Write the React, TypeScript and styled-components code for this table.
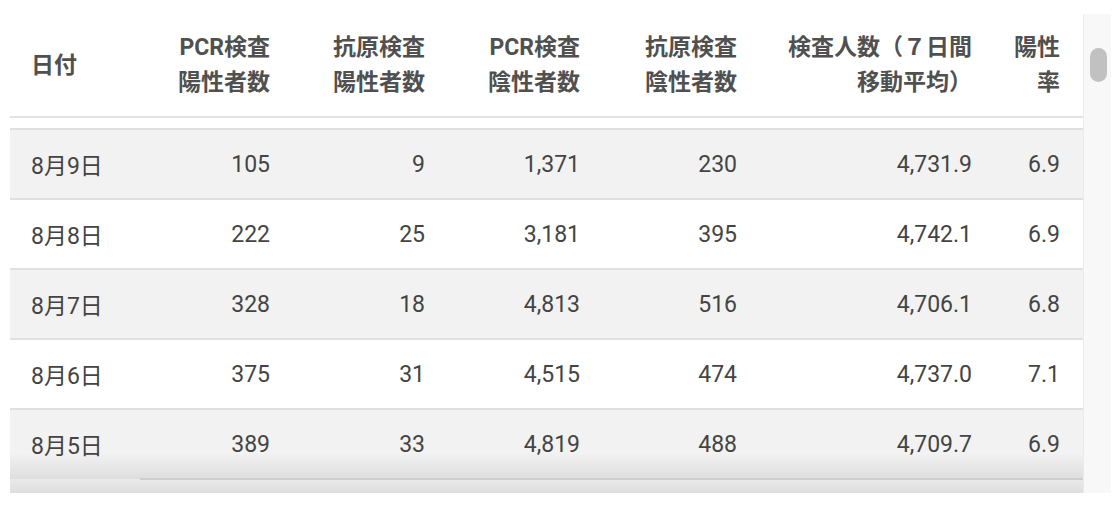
import React from 'react';
import styled, { createGlobalStyle } from 'styled-components';

const GlobalStyle = createGlobalStyle`
    html, body {
        margin: 0;
        padding: 0;
        background: #fff;
    }
    body {
        font-family: Roboto, 'Noto Sans CJK JP', 'Noto Sans', sans-serif;
    }
`;

const Page = styled.div`
    display: flex;
    align-items: flex-start;
    padding-left: 10px;
`;

const TableArea = styled.div`
    position: relative;
    width: 1073px;
    height: 493px;
    overflow: hidden;
`;

const BottomShade = styled.div`
    position: absolute;
    left: 0;
    right: 0;
    bottom: 0;
    height: 40px;
    pointer-events: none;
    background: linear-gradient(to bottom, rgba(0, 0, 0, 0), rgba(0, 0, 0, 0.13));
`;

const Table = styled.table`
    width: 1073px;
    table-layout: fixed;
    border-collapse: collapse;
    color: #444;
`;

const HeadCell = styled.th<{ $align?: 'left' | 'right'; $pr?: number }>`
    height: 70px;
    padding: 30px ${(p) => p.$pr ?? 20}px 16px ${(p) => (p.$align === 'left' ? 21 : 0)}px;
    text-align: ${(p) => p.$align ?? 'right'};
    vertical-align: middle;
    font-size: 23px;
    line-height: 35px;
    font-weight: 700;
    color: #505050;
    white-space: nowrap;
    border-bottom: 2px solid #e3e3e3;
    background: #fff;
`;

const SpacerRow = styled.tr`
    height: 12px;
    background: #fff;
`;

const Row = styled.tr<{ $striped: boolean }>`
    height: 70px;
    background: ${(p) => (p.$striped ? '#f2f2f2' : '#fff')};
    border-top: 2px solid #e0e0e0;
`;

const Cell = styled.td<{ $align?: 'left' | 'right'; $pr?: number; $noLine?: boolean }>`
    padding: 0 ${(p) => p.$pr ?? 20}px 0 ${(p) => (p.$align === 'left' ? 21 : 0)}px;
    text-align: ${(p) => p.$align ?? 'right'};
    vertical-align: middle;
    font-size: 23px;
    white-space: nowrap;
    ${(p) => p.$noLine && 'border-top: 2px solid transparent;'}
`;

const ScrollTrack = styled.div`
    box-sizing: border-box;
    margin-top: 14px;
    width: 28px;
    height: 479px;
    padding: 34px 5px 0 6px;
    background: #f8f8f8;
    border-left: 1px solid #ebebeb;
`;

const ScrollThumb = styled.div`
    width: 17px;
    height: 34px;
    border-radius: 9px;
    background: #c1c1c1;
`;

const widths = [130, 150, 155, 155, 157, 235, 91];

const rows = [
    ['8月9日', '105', '9', '1,371', '230', '4,731.9', '6.9'],
    ['8月8日', '222', '25', '3,181', '395', '4,742.1', '6.9'],
    ['8月7日', '328', '18', '4,813', '516', '4,706.1', '6.8'],
    ['8月6日', '375', '31', '4,515', '474', '4,737.0', '7.1'],
    ['8月5日', '389', '33', '4,819', '488', '4,709.7', '6.9'],
    ['', '', '', '', '', '', ''],
];

export default function App() {
    return (
        <Page>
            <GlobalStyle />
            <TableArea>
                <Table>
                    <colgroup>
                        {widths.map((w, i) => (
                            <col key={i} style={{ width: w }} />
                        ))}
                    </colgroup>
                    <thead>
                        <tr>
                            <HeadCell $align="left">日付</HeadCell>
                            <HeadCell>
                                PCR検査
                                <br />
                                陽性者数
                            </HeadCell>
                            <HeadCell>
                                抗原検査
                                <br />
                                陽性者数
                            </HeadCell>
                            <HeadCell>
                                PCR検査
                                <br />
                                陰性者数
                            </HeadCell>
                            <HeadCell>
                                抗原検査
                                <br />
                                陰性者数
                            </HeadCell>
                            <HeadCell>
                                検査人数（７日間
                                <br />
                                移動平均）
                            </HeadCell>
                            <HeadCell $pr={23}>
                                陽性
                                <br />
                                率
                            </HeadCell>
                        </tr>
                    </thead>
                    <tbody>
                        <SpacerRow>
                            <td colSpan={7} />
                        </SpacerRow>
                        {rows.map((r, i) => (
                            <Row key={i} $striped={i % 2 === 0}>
                                {r.map((v, j) => (
                                    <Cell
                                        key={j}
                                        $align={j === 0 ? 'left' : 'right'}
                                        $pr={j === 6 ? 23 : 20}
                                        $noLine={i === rows.length - 1 && j === 0}
                                    >
                                        {v}
                                    </Cell>
                                ))}
                            </Row>
                        ))}
                    </tbody>
                </Table>
                <BottomShade />
            </TableArea>
            <ScrollTrack>
                <ScrollThumb />
            </ScrollTrack>
        </Page>
    );
}
